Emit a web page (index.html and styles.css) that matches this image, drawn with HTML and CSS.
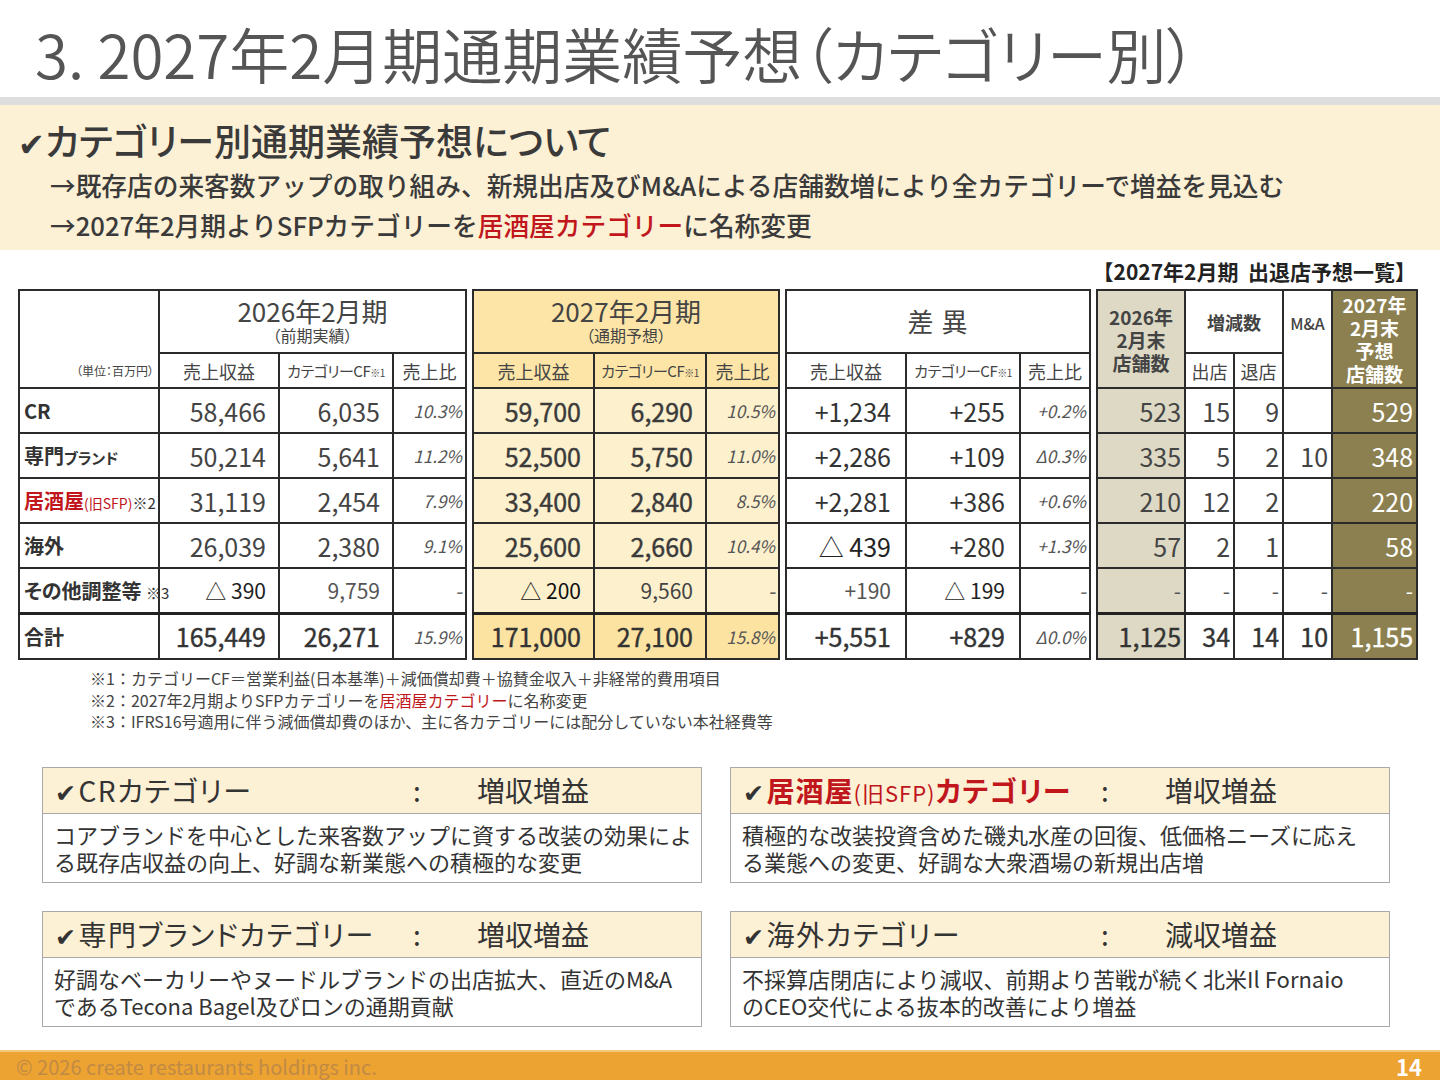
FILE: index.html
```html
<!DOCTYPE html>
<html lang="ja">
<head>
<meta charset="utf-8">
<title>3. 2027年2月期通期業績予想（カテゴリー別）</title>
<link rel="stylesheet" href="styles.css">
</head>
<body>
<div class="page">
  <header class="title">3. 2027年2月期通期業績予想（カテゴリー別）</header>
  <div class="rule"></div>
  <section class="lead">
    <h2><span class="chk">✔</span>カテゴリー別通期業績予想について</h2>
    <p>→既存店の来客数アップの取り組み、新規出店及びM&amp;Aによる店舗数増により全カテゴリーで増益を見込む</p>
    <p>→2027年2月期よりSFPカテゴリーを<span class="red">居酒屋カテゴリー</span>に名称変更</p>
  </section>
  <div class="stores-label">【2027年2月期&nbsp;&nbsp;出退店予想一覧】</div>

  <div class="tables">
    <table class="t t-prev">
      <colgroup><col class="w-lbl"><col class="w-rev"><col class="w-cf"><col class="w-pct"></colgroup>
      <thead>
        <tr class="h1"><th rowspan="2" class="unit">（単位：百万円）</th><th colspan="3" class="period">2026年2月期<small>（前期実績）</small></th></tr>
        <tr class="h2"><th>売上収益</th><th class="cf">カテゴリーCF<span class="ref">※1</span></th><th>売上比</th></tr>
      </thead>
      <tbody>
        <tr><th class="lbl">CR</th><td>58,466</td><td>6,035</td><td class="pct">10.3%</td></tr>
        <tr><th class="lbl">専門<span class="sm">ブランド</span></th><td>50,214</td><td>5,641</td><td class="pct">11.2%</td></tr>
        <tr><th class="lbl"><span class="red">居酒屋<span class="xs">(旧SFP)</span></span><span class="note">※2</span></th><td>31,119</td><td>2,454</td><td class="pct">7.9%</td></tr>
        <tr><th class="lbl">海外</th><td>26,039</td><td>2,380</td><td class="pct">9.1%</td></tr>
        <tr class="other"><th class="lbl">その他調整等 <span class="note">※3</span></th><td class="dk">△ 390</td><td>9,759</td><td class="pct">-</td></tr>
        <tr class="total"><th class="lbl">合計</th><td>165,449</td><td>26,271</td><td class="pct">15.9%</td></tr>
      </tbody>
    </table>

    <table class="t t-plan">
      <colgroup><col class="w-rev2"><col class="w-cf2"><col class="w-pct2"></colgroup>
      <thead>
        <tr class="h1"><th colspan="3" class="period">2027年2月期<small>（通期予想）</small></th></tr>
        <tr class="h2"><th>売上収益</th><th class="cf">カテゴリーCF<span class="ref">※1</span></th><th>売上比</th></tr>
      </thead>
      <tbody>
        <tr><td>59,700</td><td>6,290</td><td class="pct">10.5%</td></tr>
        <tr><td>52,500</td><td>5,750</td><td class="pct">11.0%</td></tr>
        <tr><td>33,400</td><td>2,840</td><td class="pct">8.5%</td></tr>
        <tr><td>25,600</td><td>2,660</td><td class="pct">10.4%</td></tr>
        <tr class="other"><td class="dk">△ 200</td><td>9,560</td><td class="pct">-</td></tr>
        <tr class="total"><td>171,000</td><td>27,100</td><td class="pct">15.8%</td></tr>
      </tbody>
    </table>

    <table class="t t-diff">
      <colgroup><col class="w-rev3"><col class="w-cf3"><col class="w-pct3"></colgroup>
      <thead>
        <tr class="h1"><th colspan="3" class="period diff">差 異</th></tr>
        <tr class="h2"><th>売上収益</th><th class="cf">カテゴリーCF<span class="ref">※1</span></th><th>売上比</th></tr>
      </thead>
      <tbody>
        <tr><td>+1,234</td><td>+255</td><td class="pct">+0.2%</td></tr>
        <tr><td>+2,286</td><td>+109</td><td class="pct">Δ0.3%</td></tr>
        <tr><td>+2,281</td><td>+386</td><td class="pct">+0.6%</td></tr>
        <tr><td class="dk">△ 439</td><td>+280</td><td class="pct">+1.3%</td></tr>
        <tr class="other"><td>+190</td><td class="dk">△ 199</td><td class="pct">-</td></tr>
        <tr class="total"><td>+5,551</td><td>+829</td><td class="pct">Δ0.0%</td></tr>
      </tbody>
    </table>

    <table class="t t-store">
      <colgroup><col class="w-s1"><col class="w-s2"><col class="w-s2"><col class="w-s2"><col class="w-s3"></colgroup>
      <thead>
        <tr class="h1">
          <th rowspan="2" class="beige shd">2026年<br>2月末<br>店舗数</th>
          <th colspan="2" class="bold">増減数</th>
          <th rowspan="2" class="ma">M&amp;A</th>
          <th rowspan="2" class="olive shd">2027年<br>2月末<br>予想<br>店舗数</th>
        </tr>
        <tr class="h2"><th>出店</th><th>退店</th></tr>
      </thead>
      <tbody>
        <tr><td class="beige">523</td><td>15</td><td>9</td><td></td><td class="olive">529</td></tr>
        <tr><td class="beige">335</td><td>5</td><td>2</td><td>10</td><td class="olive">348</td></tr>
        <tr><td class="beige">210</td><td>12</td><td>2</td><td></td><td class="olive">220</td></tr>
        <tr><td class="beige">57</td><td>2</td><td>1</td><td></td><td class="olive">58</td></tr>
        <tr class="other"><td class="beige">-</td><td>-</td><td>-</td><td>-</td><td class="olive">-</td></tr>
        <tr class="total"><td class="beige">1,125</td><td>34</td><td>14</td><td>10</td><td class="olive">1,155</td></tr>
      </tbody>
    </table>
  </div>

  <div class="notes">
    <p>※1：カテゴリーCF＝営業利益(日本基準)＋減価償却費＋協賛金収入＋非経常的費用項目</p>
    <p>※2：2027年2月期よりSFPカテゴリーを<span class="red">居酒屋カテゴリー</span>に名称変更</p>
    <p>※3：IFRS16号適用に伴う減価償却費のほか、主に各カテゴリーには配分していない本社経費等</p>
  </div>

  <div class="boxes">
    <div class="box">
      <div class="box-head"><span class="bname"><span class="chk">✔</span>CRカテゴリー</span><span class="colon">:</span><span class="result">増収増益</span></div>
      <div class="box-body">コアブランドを中心とした来客数アップに資する改装の効果によ<br>る既存店収益の向上、好調な新業態への積極的な変更</div>
    </div>
    <div class="box">
      <div class="box-head"><span class="bname"><span class="chk">✔</span><span class="red b">居酒屋</span><span class="red xs2">(旧SFP)</span><span class="red b">カテゴリー</span></span><span class="colon">:</span><span class="result">増収増益</span></div>
      <div class="box-body">積極的な改装投資含めた磯丸水産の回復、低価格ニーズに応え<br>る業態への変更、好調な大衆酒場の新規出店増</div>
    </div>
    <div class="box">
      <div class="box-head"><span class="bname"><span class="chk">✔</span>専門ブランドカテゴリー</span><span class="colon">:</span><span class="result">増収増益</span></div>
      <div class="box-body">好調なベーカリーやヌードルブランドの出店拡大、直近のM&amp;A<br>であるTecona Bagel及びロンの通期貢献</div>
    </div>
    <div class="box">
      <div class="box-head"><span class="bname"><span class="chk">✔</span>海外カテゴリー</span><span class="colon">:</span><span class="result">減収増益</span></div>
      <div class="box-body">不採算店閉店により減収、前期より苦戦が続く北米Il Fornaio<br>のCEO交代による抜本的改善により増益</div>
    </div>
  </div>

  <footer class="footer">
    <span class="copy">© 2026 create restaurants holdings inc.</span>
    <span class="pageno">14</span>
  </footer>
</div>
</body>
</html>
```

FILE: styles.css
```css
* { box-sizing: border-box; }

body {
  margin: 0;
  width: 1440px;
  height: 1080px;
  overflow: hidden;
  background: #fff;
  color: #333;
  font-family: "Noto Sans CJK JP", "Noto Sans", sans-serif;
}

.page {
  display: flex;
  flex-direction: column;
  height: 1080px;
}

.red { color: #c0161c; }
.chk { font-family: "DejaVu Sans", sans-serif; color: #333; }

/* title */
.title {
  height: 97px;
  padding-left: 35px;
  font-size: 60px;
  line-height: 106px;
  color: #555;
  font-weight: 350;
  font-feature-settings: "palt";
  white-space: nowrap;
  overflow: hidden;
}

.rule {
  height: 8px;
  background: #dedede;
}

/* lead band */
.lead {
  height: 145px;
  background: #fcf0d5;
  padding-top: 10px;
}
.lead h2 {
  margin: 0 0 0 18px;
  height: 50px;
  line-height: 50px;
  font-size: 37px;
  font-weight: 500;
  color: #3a3a3a;
  font-feature-settings: "palt";
}
.lead h2 .chk { font-size: 32px; color: #3a3a3a; }
.lead p {
  margin: 0 0 0 50px;
  height: 40px;
  line-height: 40px;
  font-size: 25.7px;
  font-weight: 500;
  color: #3a3a3a;
  white-space: nowrap;
}

.stores-label {
  height: 39px;
  line-height: 42px;
  text-align: right;
  padding-right: 24px;
  font-size: 21px;
  font-weight: 700;
  color: #222;
}

/* tables */
.tables {
  display: flex;
  padding-left: 18px;
  align-items: flex-start;
}
.t {
  border-collapse: collapse;
  table-layout: fixed;
  border: 2px solid #2b2b2b;
  color: #444;
}
.t th, .t td {
  border: 2px solid #2b2b2b;
  padding: 0;
  font-weight: 400;
  white-space: nowrap;
}
.t td {
  text-align: right;
  padding-right: 12px;
  font-size: 25px;
}
.t .h1 { height: 63px; }
.t .h2 { height: 35px; }
.t tbody tr { height: 45px; }
.t tbody tr.total { height: 46px; }
.t tr.total td, .t tr.total th { border-top: 3px solid #222; }

.t-prev { width: 447px; }
.t-plan { width: 306px; margin-left: 5px; }
.t-diff { width: 304px; margin-left: 5px; }
.t-store { width: 320px; margin-left: 5px; }

.w-lbl { width: 140px; }
.w-rev { width: 120px; }
.w-cf { width: 114px; }
.w-pct { width: 73px; }
.w-rev2 { width: 121px; }
.w-cf2 { width: 112px; }
.w-pct2 { width: 73px; }
.w-rev3 { width: 120px; }
.w-cf3 { width: 114px; }
.w-pct3 { width: 70px; }
.w-s1 { width: 88px; }
.w-s2 { width: 49px; }
.w-s3 { width: 85px; }

.t .period {
  font-size: 26px;
  line-height: 28px;
  color: #444;
  text-align: center;
  padding-bottom: 2px;
}
.t .period small {
  display: block;
  font-size: 16px;
  line-height: 20px;
  font-feature-settings: "palt";
}
.t .period.diff { font-size: 26px; letter-spacing: 1px; }
.t .h2 th {
  font-size: 18px;
  color: #444;
  text-align: center;
  font-feature-settings: "palt";
}
.t .h2 th.cf { font-size: 15px; letter-spacing: -0.5px; }
.t .ref { font-size: 10px; }

.t .unit {
  vertical-align: bottom;
  text-align: right;
  font-size: 12px;
  padding: 0 4px 8px 0;
  color: #444;
  font-feature-settings: "palt";
}
.t .lbl {
  text-align: left;
  padding-left: 4px;
  font-size: 20px;
  font-weight: 700;
  color: #333;
  font-feature-settings: "palt";
}
.t .lbl .sm { font-size: 15px; }
.t .lbl .xs { font-size: 14px; font-weight: 400; }
.t .lbl .note { font-size: 15px; font-weight: 400; color: #333; }

.t td.pct {
  font-size: 17px;
  font-style: italic;
  color: #555;
  padding-right: 3px;
}
.t tr.other td { font-size: 21px; color: #555; }
.t tr.other td.dk { color: #222; }
.t td.dk { color: #222; }
.t tr.total td { font-weight: 400; color: #333; -webkit-text-stroke: 0.4px #333; }
.t tr.total td.pct { -webkit-text-stroke: 0; color: #555; }

/* plan table */
.t-plan { color: #3a3a3a; }
.t-plan thead th { background: #fde5a7; }
.t-plan tbody td { background: #fdf0cd; -webkit-text-stroke: 0.4px #3a3a3a; }
.t-plan tbody td.pct { -webkit-text-stroke: 0; }
.t-plan tbody tr.total td { background: #fde3a2; }
.t-plan tbody tr.other td { -webkit-text-stroke: 0; color: #444; }
.t-plan tbody tr.other td.dk { color: #111; }

/* diff table */
.t-diff td { padding-right: 14px; color: #333; }
.t-diff td.pct { padding-right: 3px; }

/* store table */
.t-store td { padding-right: 3px; }
.t-store .beige { background: #ddd9c4; color: #444; }
.t-store .olive { background: #8c8050; color: #fff; }
.t-store tr.other td.olive { color: #fff; }
.t-store tr.total td.olive { color: #fff; -webkit-text-stroke: 0.4px #fff; }
.t-store .shd {
  font-size: 19px;
  line-height: 23px;
  font-weight: 700;
  text-align: center;
}
.t-store .beige.shd { color: #444; }
.t-store .olive.shd { color: #fff; }
.t-store th.bold { font-size: 18px; font-weight: 700; color: #444; }
.t-store .h2 th { font-size: 18px; }
.t-store .ma {
  vertical-align: top;
  padding-top: 20px;
  font-size: 16px;
  font-weight: 500;
  color: #444;
}
.t-store tr.other td { color: #555; }

/* notes */
.notes {
  padding: 8px 0 0 90px;
  font-size: 16px;
  line-height: 21.5px;
  color: #444;
}
.notes p { margin: 0; }

/* boxes */
.boxes {
  display: grid;
  grid-template-columns: 660px 660px;
  column-gap: 28px;
  row-gap: 28px;
  padding-left: 42px;
  margin-top: 34px;
}
.box {
  border: 1px solid #a8a8a8;
  height: 116px;
}
.box-head {
  height: 46px;
  background: #fcf0d5;
  border-bottom: 1px solid #a8a8a8;
  display: flex;
  align-items: center;
  padding-left: 12px;
  font-size: 28px;
  color: #333;
  white-space: nowrap;
}
.box-head .chk { font-size: 25px; margin-right: 1px; }
.bname { width: 358px; display: flex; align-items: baseline; font-feature-settings: "palt"; letter-spacing: 1.5px; }
.box-head .b { font-weight: 700; letter-spacing: 1px; }
.box-head .xs2 { font-size: 22px; letter-spacing: 1px; }
.colon { width: 64px; }
.box-body {
  padding: 7px 0 0 11px;
  font-size: 22px;
  line-height: 27px;
  color: #333;
  white-space: nowrap;
}

/* footer */
.footer {
  margin-top: auto;
  height: 30px;
  background: #eda332;
  border-top: 2px solid #f4c77a;
  display: flex;
  align-items: center;
  justify-content: space-between;
  padding: 0 18px 0 16px;
}
.copy {
  font-size: 20px;
  color: #c08a45;
}
.pageno {
  font-size: 22px;
  font-weight: 700;
  color: #fff;
}
```
